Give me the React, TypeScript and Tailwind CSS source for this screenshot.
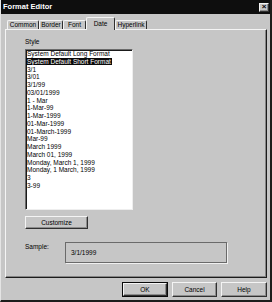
import React from 'react'

const formats = [
    'System Default Long Format',
    'System Default Short Format',
    '3/1',
    '3/01',
    '3/1/99',
    '03/01/1999',
    '1 - Mar',
    '1-Mar-99',
    '1-Mar-1999',
    '01-Mar-1999',
    '01-March-1999',
    'Mar-99',
    'March 1999',
    'March 01, 1999',
    'Monday, March 1, 1999',
    'Monday, 1 March, 1999',
    '3',
    '3-99',
]

const tabs = [
    { label: 'Common', w: 'w-[32px]' },
    { label: 'Border', w: 'w-[24px]' },
    { label: 'Font', w: 'w-[23px]' },
    { label: 'Date', w: 'w-[29px]', active: true },
    { label: 'Hyperlink', w: 'w-[32px]' },
]

const bevel =
    'border border-t-[#f4f4f4] border-l-[#f4f4f4] border-b-[#303030] border-r-[#303030] shadow-[inset_-1px_-1px_0_#8c8c8c]'

const App = () => {
    return (
        <div className="w-[272px] h-[302px] bg-[#c6c6c6] border-l border-l-[#e4e4e4] border-r-2 border-r-[#1c1c1c] border-b-2 border-b-[#1c1c1c] flex flex-col font-['Liberation_Sans',Arial,sans-serif] text-[6.5px] leading-[8px] text-black">
            {/* title bar */}
            <div className="h-[14px] bg-[#0e0e0e] flex items-center justify-between pl-[2px] pr-[1px]">
                <span className="text-white font-bold text-[7.5px]">Format Editor</span>
                <div className={`w-[10px] h-[9px] bg-[#c6c6c6] flex items-center justify-center text-[8px] font-bold leading-none ${bevel}`}>
                    ×
                </div>
            </div>

            {/* tabs */}
            <div className="mt-[3px] pl-[6px] h-[12px] flex items-end relative z-10">
                {tabs.map((t) =>
                    t.active ? (
                        <div
                            key={t.label}
                            className={`${t.w} h-[13px] -mb-[1px] bg-[#c6c6c6] border-t border-l border-r border-t-[#f4f4f4] border-l-[#f4f4f4] border-r-[#303030] rounded-t-[2px] flex justify-center pt-[2px]`}
                        >
                            {t.label}
                        </div>
                    ) : (
                        <div
                            key={t.label}
                            className={`${t.w} h-[9px] border-t border-l border-r border-t-[#f4f4f4] border-l-[#f4f4f4] border-r-[#303030] rounded-t-[2px] flex justify-center pt-[0px]`}
                        >
                            {t.label}
                        </div>
                    )
                )}
            </div>

            {/* panel */}
            <div className="ml-[4px] w-[262px] h-[249px] border border-t-[#f4f4f4] border-l-[#f4f4f4] border-b-[#1c1c1c] border-r-[#1c1c1c] shadow-[inset_-1px_-1px_0_#858585] pl-[19px] pt-[8px]">
                <div className="mb-[3px]">Style</div>
                <div className="w-[108px] h-[161px] bg-white border border-t-[#6a6a6a] border-l-[#6a6a6a] border-b-[#eeeeee] border-r-[#eeeeee] shadow-[inset_1px_1px_0_#1a1a1a] pl-[1px] pt-[0px] overflow-hidden">
                    {formats.map((f, i) => (
                        <div key={f} className="leading-[7.75px] whitespace-nowrap">
                            {i === 1 ? (
                                <span className="bg-[#0a0a0a] text-white px-[1px] -ml-[1px]">{f}</span>
                            ) : (
                                f
                            )}
                        </div>
                    ))}
                </div>

                <div className={`mt-[6px] w-[63px] h-[13px] flex items-center justify-center ${bevel}`}>
                    Customize
                </div>

                <div className="mt-[13px] flex">
                    <div className="w-[40px] pt-[1px]">Sample:</div>
                    <div className="w-[162px] h-[21px] border border-t-[#6a6a6a] border-l-[#6a6a6a] border-b-[#6a6a6a] border-r-[#6a6a6a] shadow-[1px_1px_0_#f0f0f0] pl-[5px] pt-[6px]">
                        3/1/1999
                    </div>
                </div>
            </div>

            {/* buttons */}
            <div className="mt-[4px] pr-[3px] flex justify-end gap-[4px]">
                <div className="w-[46px] h-[15px] border border-[#0a0a0a] flex">
                    <div className={`flex-1 flex items-center justify-center ${bevel}`}>OK</div>
                </div>
                <div className={`w-[45px] h-[15px] flex items-center justify-center ${bevel}`}>Cancel</div>
                <div className={`w-[46px] h-[15px] flex items-center justify-center ${bevel}`}>Help</div>
            </div>
        </div>
    )
}

export default App
